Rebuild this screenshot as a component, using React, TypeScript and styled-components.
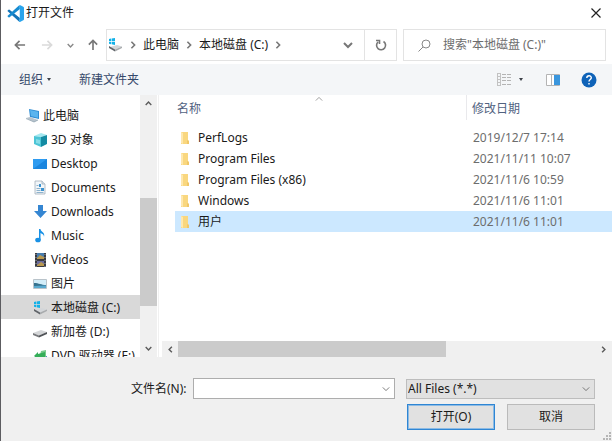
import React from "react";
import styled, { createGlobalStyle, css } from "styled-components";

const GlobalStyle = createGlobalStyle`
  * { box-sizing: border-box; }
  body { margin: 0; }
  body, button, input, select {
    font-family: "Noto Sans", "Noto Sans CJK SC", sans-serif;
    font-size: 12px;
    line-height: 16px;
    color: #1a1a1a;
  }
  button { border: 0; padding: 0; background: none; }
  svg { display: block; flex: none; }
`;

const Dialog = styled.div`
  display: flex;
  flex-direction: column;
  height: 100vh;
  border-left: 1px solid #5c5c60;
  background: #fff;
  overflow: hidden;
`;

const TitleBar = styled.header`
  display: flex;
  align-items: center;
  gap: 2px;
  height: 28px;
  padding: 0 10px 2px 6px;
`;

const Title = styled.h1`
  flex: 1;
  margin: 0;
  font-size: 12px;
  font-weight: 400;
`;

const IconButton = styled.button<{ $width?: number }>`
  display: flex;
  align-items: center;
  justify-content: center;
  width: ${(p) => p.$width ?? 16}px;
  height: 16px;
`;

const NavBar = styled.nav`
  display: flex;
  align-items: center;
  height: 36px;
  padding: 0 6px 2px 11px;
`;

const History = styled.div`
  display: flex;
  width: 94px;
  justify-content: space-between;
  padding-right: 5px;
`;

const AddressBar = styled.div`
  display: flex;
  flex: 1;
  align-items: center;
  height: 32px;
  border: 1px solid #e3e3e3;
`;

const Crumbs = styled.div`
  display: flex;
  flex: 1;
  align-items: center;
  gap: 6px;
  padding-left: 1px;
`;

const Crumb = styled.button`
  white-space: nowrap;
`;

const Refresh = styled(IconButton)`
  width: 32px;
  height: 30px;
  margin-left: 8px;
  border-left: 1px solid #e3e3e3;
`;

const SearchBox = styled.label`
  display: flex;
  align-items: center;
  gap: 12px;
  width: 203px;
  height: 32px;
  margin-left: 6px;
  padding-left: 14px;
  border: 1px solid #e3e3e3;
`;

const SearchInput = styled.input`
  flex: 1;
  min-width: 0;
  padding: 0;
  border: 0;
  outline: 0;
  background: transparent;
  &::placeholder { color: #6d6d6d; opacity: 1; }
`;

const Toolbar = styled.div`
  display: flex;
  align-items: center;
  height: 31px;
  padding: 0 15px 0 18px;
  background: #f4f6f8;
`;

const Command = styled.button`
  display: flex;
  align-items: center;
  gap: 4px;
  margin-right: 28px;
  color: #34486a;
`;

const ToolIcons = styled.div`
  display: flex;
  align-items: center;
  margin-left: auto;
`;

const HelpButton = styled(IconButton)`
  margin-left: 20px;
`;

const PaneButton = styled(IconButton)`
  margin-left: 15px;
`;

const Body = styled.div`
  display: flex;
  flex: 1;
  min-height: 0;
`;

const Sidebar = styled.aside`
  flex: 0 0 139px;
  overflow: hidden;
  padding-top: 8px;
`;

const TreeItem = styled.button<{ $root?: boolean; $selected?: boolean }>`
  display: flex;
  align-items: center;
  gap: 3px;
  width: 100%;
  height: 24px;
  padding-top: 2px;
  padding-left: ${(p) => (p.$root ? 24 : 32)}px;
  white-space: nowrap;
  background: ${(p) => (p.$selected ? "#d9d9d9" : "transparent")};
`;

const VerticalBar = styled.div`
  display: grid;
  grid-template-rows: 17px 86fr 108fr 34fr 17px;
  flex: 0 0 17px;
  background: #f0f0f0;
`;

const HorizontalBar = styled.div`
  display: grid;
  grid-template-columns: 16px 269fr 149fr 17px;
  height: 16px;
  background: #f0f0f0;
`;

const Thumb = styled.div`
  background: #cbcbcb;
`;

const ScrollButton = styled.button`
  display: flex;
  align-items: center;
  justify-content: center;
`;

const FilePane = styled.main`
  display: flex;
  flex: 1;
  flex-direction: column;
  min-width: 0;
  margin-left: 1px;
  padding-left: 3px;
  border-left: 1px solid #f0f0f0;
`;

const ListArea = styled.div`
  flex: 1;
  min-height: 0;
  padding-left: 13px;
`;

const FileTable = styled.table`
  width: 100%;
  table-layout: fixed;
  border-collapse: collapse;
`;

const HeadCell = styled.th<{ $date?: boolean }>`
  height: 32px;
  padding: 0 0 0 2px;
  font-weight: 400;
  text-align: left;
  vertical-align: top;
  color: #51627f;
  ${(p) => p.$date && css`
    width: 146px;
    padding-left: 6px;
    background: linear-gradient(#e9e9ec, #e9e9ec) 0 0 / 1px 25px no-repeat;
  `}
`;

const HeadContent = styled.div`
  display: grid;
  grid-template-columns: 1fr 8px 1fr;
  align-items: start;
`;

const HeadLabel = styled.span`
  display: block;
  padding-top: 6px;
`;

const SortMark = styled.span`
  margin-left: -3px;
`;

const FileRow = styled.tr<{ $selected?: boolean }>`
  height: 21px;
  background: ${(p) => (p.$selected ? "#cce8ff" : "transparent")};
`;

const NameCell = styled.td`
  padding: 0 0 0 5px;
`;

const FileName = styled.span`
  display: flex;
  align-items: center;
  gap: 8px;
`;

const DateCell = styled.td`
  padding: 0 0 0 7px;
  color: #6d6d6d;
`;

const Footer = styled.form`
  display: flex;
  flex-direction: column;
  gap: 5px;
  height: 84px;
  padding: 21px 17px 0 130px;
  background: #f0f0f0;
`;

const FieldRow = styled.div`
  display: flex;
  align-items: center;
`;

const NameLabel = styled.label`
  width: 62px;
  white-space: nowrap;
`;

const ComboBox = styled.div`
  display: flex;
  flex: 1;
  align-items: center;
  height: 21px;
  margin-right: 11px;
  border: 1px solid #adadad;
  background: #fff;
`;

const NameInput = styled.input`
  flex: 1;
  min-width: 0;
  height: 19px;
  padding: 0 2px;
  border: 0;
  outline: 0;
  background: transparent;
`;

const SelectBox = styled.div`
  display: grid;
  grid-template-columns: 1fr 17px;
  align-items: center;
  width: 189px;
  height: 20px;
  border: 1px solid #bdbdbd;
  background: #e1e1e1;
`;

const TypeSelect = styled.select`
  grid-area: 1 / 1 / 2 / 3;
  height: 18px;
  padding: 0 1px;
  border: 0;
  outline: 0;
  appearance: none;
  background: transparent;
`;

const SelectArrow = styled.span`
  grid-area: 1 / 2 / 2 / 3;
  justify-self: center;
  pointer-events: none;
`;

const Actions = styled.div`
  display: flex;
  justify-content: flex-end;
  gap: 12px;
`;

const ActionButton = styled.button<{ $primary?: boolean }>`
  width: 88px;
  height: 26px;
  border: ${(p) => (p.$primary ? "1px solid #2f86d4" : "1px solid #bababa")};
  box-shadow: ${(p) => (p.$primary ? "inset 0 0 0 1px #8dbbe4" : "none")};
  background: #e1e1e1;
`;

const Grip = styled.div`
  position: absolute;
  right: 1px;
  bottom: 1px;
`;

type ChevronProps = { dir: "up" | "down" | "left" | "right"; size?: number; color?: string; weight?: number };

const chevronPaths = {
  up: "M1 7 5 3l4 4",
  down: "M1 3l4 4 4-4",
  left: "M7 1 3 5l4 4",
  right: "M3 1l4 4-4 4",
};

function Chevron({ dir, size = 8, color = "#5a5a5a", weight = 2 }: ChevronProps) {
  return (
    <svg width={size} height={size} viewBox="0 0 10 10" fill="none" stroke={color} strokeWidth={weight}>
      <path d={chevronPaths[dir]} />
    </svg>
  );
}

function Caret() {
  return (
    <svg width="4" height="3" viewBox="0 0 4 3"><path d="M0 0h4L2 3z" fill="#3c4048" /></svg>
  );
}

function Arrow({ dir, color }: { dir: "left" | "right" | "up"; color: string }) {
  const d = {
    left: "M12 6.500H1.500M6 2 1.500 6.500 6 11",
    right: "M1 6.500h10.500M7 2l4.500 4.500L7 11",
    up: "M6.500 12V1.500M2 6l4.500-4.500L11 6",
  }[dir];
  return (
    <svg width="12" height="12" viewBox="0 0 13 13" fill="none" stroke={color} strokeWidth="1.800"><path d={d} /></svg>
  );
}

function CodeLogo() {
  return (
    <svg width="17" height="17" viewBox="0 0 100 100">
      <path d="M3 34 9 28q3-2 6 0L76 77 72 98 4 37q-2-2-1-3z" fill="#1474b8" />
      <path d="M3 66l6 6q3 2 6 0L76 23 72 2 4 63q-2 2-1 3z" fill="#168bd0" />
      <path d="M71 99q5 1 8-1l17-8q4-2 4-6V16q0-4-4-6L79 2q-5-2-9 2l5 21v50z" fill="#29a4ec" />
    </svg>
  );
}

type IconName = "pc" | "cube" | "desktop" | "doc" | "download" | "music" | "video" | "picture" | "win" | "disk" | "dvd";

const drawings: Record<IconName, React.ReactNode> = {
  pc: (
    <>
      <path d="M4 1l10 2v8L5 9z" fill="#2f8dd4" />
      <path d="M5 2l8 1.700v6L6 8z" fill="#5ab4ee" />
      <path d="M1 10l4-1 8 3-4 2z" fill="#b7c3cd" />
      <path d="M1 10.500l8 3.500 4-2" fill="none" stroke="#8499a8" strokeWidth=".7" />
    </>
  ),
  cube: (
    <>
      <path d="M1 4l7-3 6 2-6 2z" fill="#a4e8f0" />
      <path d="M1 4l7 1v10l-7-3z" fill="#4cc5d6" />
      <path d="M8 5l6-2v9l-6 3z" fill="#138ba3" />
      <path d="M3 7l4 1v4l-4-1z" fill="#86dde8" />
    </>
  ),
  desktop: (
    <>
      <path d="M0 3h14v10H0z" fill="#1b86df" />
      <path d="M0 3h14L0 13z" fill="#2e9bf0" />
    </>
  ),
  doc: (
    <>
      <path d="M2 1h7l3 3v10H2z" fill="#f2f6f9" stroke="#a3b0bb" strokeWidth=".8" />
      <path d="M9 1v3h3" fill="#d4e1eb" stroke="#a3b0bb" strokeWidth=".8" />
      <path d="M6 4h2v3H6zM8 8h3v3H8z" fill="#3b92cf" />
      <path d="M3.500 5.500h2M3.500 8.500h4M3.500 10.500h4M3.500 12.500h7" stroke="#8eb3cd" />
    </>
  ),
  download: <path d="M5 1h5v6h4l-6.500 7L1 7h4z" fill="#3586d2" />,
  music: (
    <>
      <path d="M6 1h1.500c0 3 5 3 3.500 8 0-3-2-3-3.500-4v7H6z" fill="#1991e5" />
      <ellipse cx="5" cy="12" rx="2.800" ry="2.300" fill="#1991e5" />
    </>
  ),
  video: (
    <>
      <path d="M2 1h11v14H2z" fill="#393a40" />
      <path d="M4 1h7v6H4z" fill="#477cae" />
      <path d="M4 9h7v5H4z" fill="#6b6c9e" />
      <path d="M4 6l3-3 4 2v2H4zM4 13l4-3 3 2v2H4z" fill="#b9984e" />
      <path d="M3 2v13M12 2v13" stroke="#9aa2ae" strokeDasharray="1 2" />
    </>
  ),
  picture: (
    <>
      <path d="M.5 3.500h13v9H.5z" fill="#d2edf9" stroke="#b9c3ca" />
      <path d="M1 7c5 0 7 2 12 2v3H1z" fill="#35728f" />
      <path d="M1 10l12-.5V12H1z" fill="#58a9cf" />
    </>
  ),
  win: (
    <>
      <path d="M1 2l2-.4V4H1zM3.600 1.500L7 1v3H3.600zM1 4.700h2v2.500l-2-.5zM3.600 4.700H7V8l-3.400-.7z" fill="#13b1e8" />
      <path d="M2 10l7-2 5 1.500-7 3z" fill="#d3d6d9" />
      <path d="M1 9l6 3.500v2L1 11z" fill="#606469" />
      <path d="M7 12.500l7-3V11l-7 3.500z" fill="#a8abad" />
    </>
  ),
  disk: (
    <>
      <path d="M0 9l8-3 6 2-8 3.500z" fill="#d4d6d8" />
      <path d="M0 9l6 2.500v2L0 11z" fill="#77797c" />
      <path d="M6 11.500L14 8v2l-8 3.500z" fill="#505357" />
    </>
  ),
  dvd: (
    <>
      <path d="M2 8h12v7H2z" fill="#5686c5" />
      <path d="M8 3l5-1v9H6z" fill="#79ca8c" />
      <path d="M1 8l4-4v2l7-2v6H6v2z" fill="#35ae59" />
      <path d="M2 13h12" stroke="#424b87" strokeWidth="2" />
    </>
  ),
};

function Icon({ name }: { name: IconName }) {
  return <svg width="15" height="16" viewBox="0 0 15 16">{drawings[name]}</svg>;
}

function Folder() {
  return (
    <svg width="10" height="14" viewBox="0 0 10 14">
      <path d="M1 1h7v8l1 1v3H1z" fill="#f9d77f" />
      <path d="M1 1l2 1v11l-2-1z" fill="#ffe8ae" />
      <path d="M7 9l2 1v3H7z" fill="#f0c768" />
    </svg>
  );
}

const tree: { icon: IconName; label: string; root?: boolean; selected?: boolean }[] = [
  { icon: "pc", label: "此电脑", root: true },
  { icon: "cube", label: "3D 对象" },
  { icon: "desktop", label: "Desktop" },
  { icon: "doc", label: "Documents" },
  { icon: "download", label: "Downloads" },
  { icon: "music", label: "Music" },
  { icon: "video", label: "Videos" },
  { icon: "picture", label: "图片" },
  { icon: "win", label: "本地磁盘 (C:)", selected: true },
  { icon: "disk", label: "新加卷 (D:)" },
  { icon: "dvd", label: "DVD 驱动器 (E:)" },
];

const files = [
  { name: "PerfLogs", date: "2019/12/7 17:14" },
  { name: "Program Files", date: "2021/11/11 10:07" },
  { name: "Program Files (x86)", date: "2021/11/6 10:59" },
  { name: "Windows", date: "2021/11/6 11:01" },
  { name: "用户", date: "2021/11/6 11:01", selected: true },
];

export default function App() {
  return (
    <Dialog>
      <GlobalStyle />
      <TitleBar>
        <CodeLogo />
        <Title>打开文件</Title>
        <IconButton $width={12} aria-label="关闭">
          <svg width="10" height="10" viewBox="0 0 10 10" stroke="#222" strokeWidth="1.200"><path d="M.5.5l9 9M9.500.5l-9 9" /></svg>
        </IconButton>
      </TitleBar>
      <NavBar>
        <History>
          <IconButton aria-label="后退"><Arrow dir="left" color="#777" /></IconButton>
          <IconButton aria-label="前进"><Arrow dir="right" color="#dadada" /></IconButton>
          <IconButton $width={8} aria-label="最近位置"><Chevron dir="down" size={7} color="#888" /></IconButton>
          <IconButton aria-label="上移"><Arrow dir="up" color="#777" /></IconButton>
        </History>
        <AddressBar>
          <Crumbs>
            <Icon name="win" />
            <Chevron dir="right" color="#777" />
            <Crumb>此电脑</Crumb>
            <Chevron dir="right" color="#777" />
            <Crumb>本地磁盘 (C:)</Crumb>
            <Chevron dir="right" color="#777" />
          </Crumbs>
          <IconButton aria-label="以前的位置"><Chevron dir="down" size={10} color="#777" /></IconButton>
          <Refresh aria-label="刷新">
            <svg width="12" height="12" viewBox="0 0 12 12" fill="none" stroke="#777" strokeWidth="1.600">
              <path d="M8.500 2.500A4.500 4.500 0 1 1 3 3M1 1.500h3.500V5" />
            </svg>
          </Refresh>
        </AddressBar>
        <SearchBox>
          <svg width="13" height="13" viewBox="0 0 13 13" fill="none" stroke="#888"><circle cx="8" cy="5" r="4" /><path d="M5 8L.5 12.500" /></svg>
          <SearchInput aria-label="搜索" placeholder={'搜索"本地磁盘 (C:)"'} />
        </SearchBox>
      </NavBar>
      <Toolbar>
        <Command>组织 <Caret /></Command>
        <Command>新建文件夹</Command>
        <ToolIcons>
          <IconButton aria-label="视图">
            <svg width="14" height="13" viewBox="0 0 14 13" stroke="#b4b4b4">
              <path d="M0 .5h4M0 3.500h4M0 6.500h4M0 9.500h4M0 12.500h4M.5 0v13M3.500 0v13" stroke="#c2c2c2" />
              <path d="M5 1.500h4M10 1.500h4M5 4.500h4M10 4.500h4M5 7.500h4M10 7.500h4M5 11.500h4M10 11.500h4" />
            </svg>
          </IconButton>
          <IconButton $width={18} aria-label="更多视图"><Caret /></IconButton>
          <PaneButton aria-label="预览窗格">
            <svg width="14" height="12" viewBox="0 0 14 12">
              <path d="M.5.5h13v11H.5zM5.500 1v10" fill="#fff" stroke="#b4b4b4" />
              <path d="M8 1h6v10H8z" fill="#3a96dd" />
            </svg>
          </PaneButton>
          <HelpButton aria-label="帮助">
            <svg width="16" height="16" viewBox="0 0 16 16">
              <circle cx="8" cy="8" r="7.500" fill="#0f63b8" />
              <path d="M5.800 6c0-3 4.500-3 4.500-.3C10.300 7.500 8 7.500 8 9.500M8 11v1.500" fill="none" stroke="#fff" strokeWidth="1.400" />
            </svg>
          </HelpButton>
        </ToolIcons>
      </Toolbar>
      <Body>
        <Sidebar>
          {tree.map((item) => (
            <TreeItem key={item.label} $root={item.root} $selected={item.selected}>
              <Icon name={item.icon} />
              {item.label}
            </TreeItem>
          ))}
        </Sidebar>
        <VerticalBar>
          <ScrollButton aria-label="向上滚动"><Chevron dir="up" size={7} /></ScrollButton>
          <span />
          <Thumb />
          <span />
          <ScrollButton aria-label="向下滚动"><Chevron dir="down" size={7} /></ScrollButton>
        </VerticalBar>
        <FilePane>
          <ListArea>
            <FileTable>
              <thead>
                <tr>
                  <HeadCell>
                    <HeadContent>
                      <HeadLabel>名称</HeadLabel>
                      <SortMark><Chevron dir="up" color="#888" weight={1} /></SortMark>
                    </HeadContent>
                  </HeadCell>
                  <HeadCell $date><HeadLabel>修改日期</HeadLabel></HeadCell>
                </tr>
              </thead>
              <tbody>
                {files.map((file) => (
                  <FileRow key={file.name} $selected={file.selected}>
                    <NameCell><FileName><Folder />{file.name}</FileName></NameCell>
                    <DateCell>{file.date}</DateCell>
                  </FileRow>
                ))}
              </tbody>
            </FileTable>
          </ListArea>
          <HorizontalBar>
            <ScrollButton aria-label="向左滚动"><Chevron dir="left" size={7} /></ScrollButton>
            <Thumb />
            <span />
            <ScrollButton aria-label="向右滚动"><Chevron dir="right" size={7} /></ScrollButton>
          </HorizontalBar>
        </FilePane>
      </Body>
      <Footer onSubmit={(e) => e.preventDefault()}>
        <FieldRow>
          <NameLabel htmlFor="file-name">文件名(N):</NameLabel>
          <ComboBox>
            <NameInput id="file-name" />
            <IconButton type="button" aria-label="显示文件名列表"><Chevron dir="down" weight={1} /></IconButton>
          </ComboBox>
          <SelectBox>
            <TypeSelect aria-label="文件类型"><option>All Files (*.*)</option></TypeSelect>
            <SelectArrow><Chevron dir="down" weight={1} /></SelectArrow>
          </SelectBox>
        </FieldRow>
        <Actions>
          <ActionButton $primary>打开(O)</ActionButton>
          <ActionButton type="button">取消</ActionButton>
        </Actions>
      </Footer>
      <Grip>
        <svg width="8" height="8" viewBox="0 0 8 8" fill="#b5b5b5">
          <path d="M6 0h2v2H6zM3 3h2v2H3zM6 3h2v2H6zM0 6h2v2H0zM3 6h2v2H3zM6 6h2v2H6z" />
        </svg>
      </Grip>
    </Dialog>
  );
}
